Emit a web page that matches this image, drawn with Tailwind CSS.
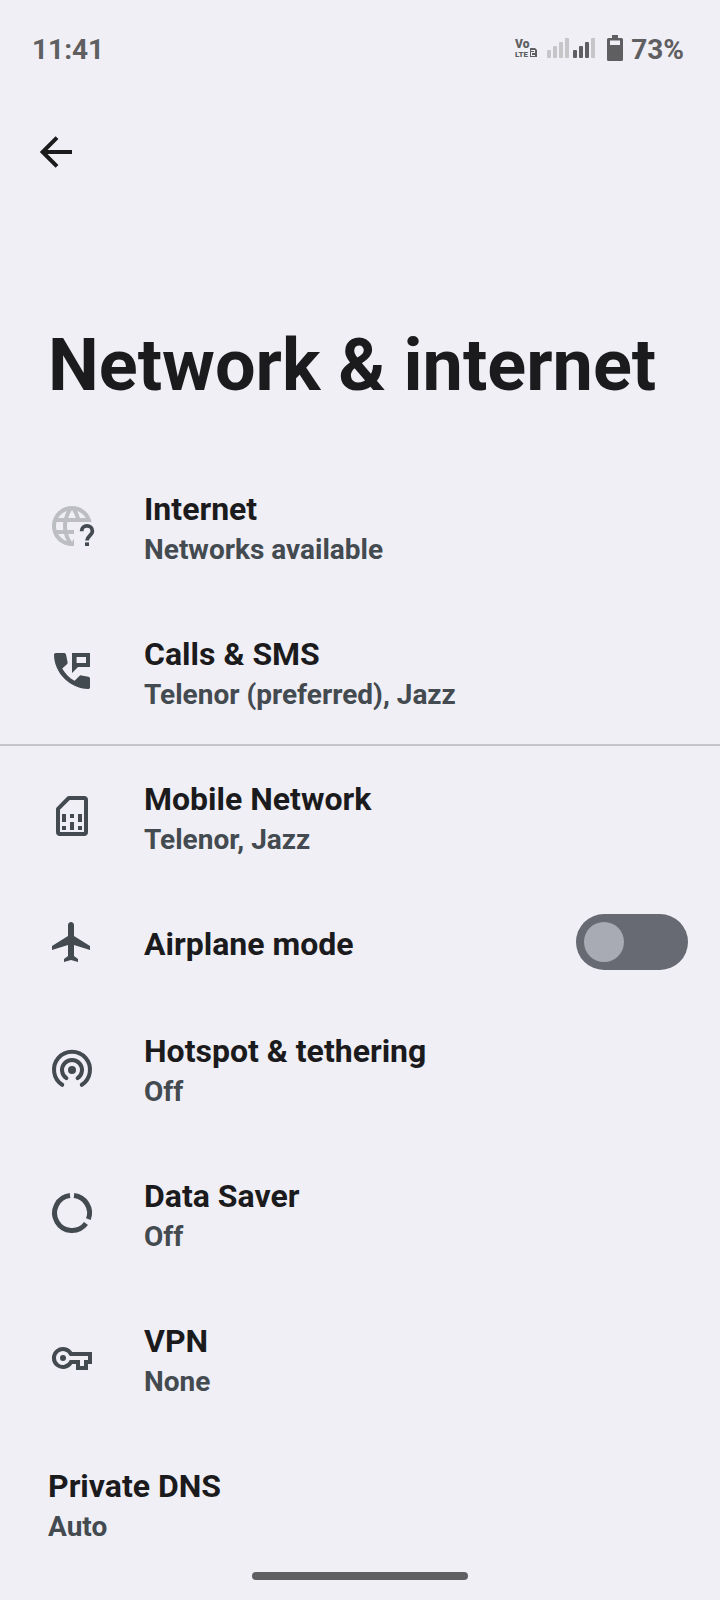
<!DOCTYPE html>
<html lang="en">
<head>
    <meta charset="UTF-8" />
    <meta name="viewport" content="width=device-width, initial-scale=1.0" />
    <title>Network &amp; internet</title>
    <script src="https://cdn.jsdelivr.net/npm/@tailwindcss/browser@4"></script>
</head>
<body class="min-h-screen bg-[#f0eff5] font-['Roboto',sans-serif] font-bold text-[#1b1b1d]">

<!-- Status bar -->
<div class="flex h-24 items-center justify-between pl-8 pr-9 text-[28px] leading-8 text-[#5f5f61]">
    <span class="pt-1">11:41</span>
    <div class="flex items-center">
        <svg class="mr-2 h-8 w-6" viewBox="0 0 24 32" fill="currentColor" font-family="Roboto, sans-serif" font-weight="900" aria-label="VoLTE 2">
            <text x="0" y="16" font-size="12">Vo</text>
            <text x="0" y="25" font-size="8">LTE</text>
            <path fill-rule="evenodd" d="M15 16h5l2 2v7h-7zM16 18v1h3v1h-3v4h4v-1h-3v-2h3v-3z" />
        </svg>
        <svg class="mr-3 h-8 w-12" viewBox="0 0 48 32" fill="currentColor" aria-label="Signal">
            <g fill="#c6c6c9">
                <rect x="0" y="18" width="4" height="8" rx="1" />
                <rect x="6" y="14" width="4" height="12" rx="1" />
                <rect x="12" y="10" width="4" height="16" rx="1" />
                <rect x="18" y="6" width="4" height="20" rx="1" />
                <rect x="44" y="6" width="4" height="20" rx="1" />
            </g>
            <rect x="26" y="18" width="4" height="8" rx="1" />
            <rect x="32" y="14" width="4" height="12" rx="1" />
            <rect x="38" y="10" width="4" height="16" rx="1" />
        </svg>
        <svg class="mr-2 h-8 w-4" viewBox="0 0 16 32" fill="currentColor" aria-label="Battery">
            <path fill-rule="evenodd" d="M5 3h6v3h3.500a1.500 1.500 0 0 1 1.500 1.500v20a1.500 1.500 0 0 1-1.500 1.500h-13a1.500 1.500 0 0 1-1.500-1.500v-20a1.500 1.500 0 0 1 1.500-1.500H5zM3 8.500V13h10V8.500z" />
        </svg>
        <span class="pt-1">73%</span>
    </div>
</div>

<header>
    <div class="px-8 pt-8">
        <button type="button" aria-label="Back" class="block">
            <svg class="size-12" viewBox="0 0 24 24" fill="none" stroke="currentColor" stroke-width="2">
                <path d="M20 12H5.500M12.500 4.800 5.300 12l7.200 7.200" />
            </svg>
        </button>
    </div>
    <h1 class="px-12 pt-[148px] pb-[46px] text-[72px] leading-[83px]">Network &amp; internet</h1>
</header>

<main class="text-[32px] leading-10">
    <a href="#internet" class="flex min-h-[145px] items-center gap-12 px-12">
        <svg class="size-12 shrink-0 text-[#434a50]" viewBox="0 0 24 24" fill="currentColor">
            <clipPath id="globe"><path d="M0 0h24v10h-9.500v4H13v10H0z" /></clipPath>
            <path fill="#bdbec2" clip-path="url(#globe)" d="M11.990 2C6.470 2 2 6.480 2 12s4.470 10 9.990 10C17.520 22 22 17.520 22 12S17.520 2 11.990 2zm6.930 6h-2.950c-.32-1.250-.78-2.450-1.380-3.560 1.840.63 3.370 1.910 4.330 3.560zM12 4.040c.83 1.200 1.480 2.530 1.910 3.960h-3.820c.43-1.430 1.080-2.760 1.910-3.960zM4.260 14C4.100 13.360 4 12.690 4 12s.1-1.360.26-2h3.380c-.08.66-.14 1.320-.14 2s.06 1.340.14 2H4.260zm.82 2h2.950c.32 1.250.78 2.450 1.380 3.560-1.840-.63-3.370-1.900-4.330-3.560zm2.950-8H5.080c.96-1.660 2.490-2.930 4.330-3.560C8.810 5.550 8.350 6.750 8.030 8zM12 19.960c-.83-1.200-1.480-2.530-1.910-3.960h3.820c-.43 1.430-1.080 2.760-1.910 3.960zM15 14H9.660c-.09-.66-.16-1.320-.16-2s.07-1.350.16-2H15z" />
            <path fill="none" stroke="currentColor" stroke-width="1.900" d="M16.800 14.600a2.700 2.700 0 0 1 5.400 0c0 2.100-2.700 2.300-2.700 4.700" />
            <path d="M18.500 20.200h2V22h-2z" />
        </svg>
        <div class="pt-2">
            <h2>Internet</h2>
            <p class="text-[28px] leading-[42px] text-[#434a50]">Networks available</p>
        </div>
    </a>

    <a href="#calls" class="flex min-h-[145px] items-center gap-12 px-12">
        <svg class="size-12 shrink-0 text-[#434a50]" viewBox="0 0 24 24" fill="currentColor">
            <path d="M3.900 3H8c.5 0 .9.3 1 .8l.8 3.800c.1.4 0 .7-.3 1l-2.400 2.100c1.400 2.500 3.600 4.700 6.200 6.200l2.400-2.400c.3-.3.6-.4 1-.3l3.500.7c.5.1.8.5.8 1v4.200c0 .5-.4.900-.9.900C11 21 3 12.800 3 3.900c0-.5.4-.9.9-.9z" />
            <path fill-rule="evenodd" d="M12 3h9v7h-6l-3 3zM14.300 5v3H19V5z" />
        </svg>
        <div class="pt-2">
            <h2>Calls &amp; SMS</h2>
            <p class="text-[28px] leading-[42px] text-[#434a50]">Telenor (preferred), Jazz</p>
        </div>
    </a>

    <hr class="mt-px -mb-[3px] border-t-2 border-[#c6c5cc]" />

    <a href="#mobile" class="flex min-h-[145px] items-center gap-12 px-12">
        <svg class="size-12 shrink-0 text-[#434a50]" viewBox="0 0 24 24" fill="currentColor">
            <path fill="none" stroke="currentColor" stroke-width="2" stroke-linejoin="round" d="M10.400 3H18a1 1 0 0 1 1 1v16a1 1 0 0 1-1 1H6a1 1 0 0 1-1-1V8.400z" />
            <path d="M7 11h2v4H7zM11 11h2v2h-2zM15 11h2v4h-2zM7 17h2v2H7zM11 15h2v4h-2zM15 17h2v2h-2z" />
        </svg>
        <div class="pt-2">
            <h2>Mobile Network</h2>
            <p class="text-[28px] leading-[42px] text-[#434a50]">Telenor, Jazz</p>
        </div>
    </a>

    <div class="flex min-h-[107px] items-center gap-12 pl-12 pr-8">
        <svg class="size-12 shrink-0 text-[#434a50]" viewBox="0 0 24 24" fill="currentColor">
            <path d="M21 16v-2l-8-5V3.500C13 2.670 12.330 2 11.500 2S10 2.670 10 3.500V9l-8 5v2l8-2.500V19l-2 1.500V22l3.500-1 3.500 1v-1.500L13 19v-5.500l8 2.500z" />
        </svg>
        <label for="airplane" class="flex-1 pt-1">Airplane mode</label>
        <input type="checkbox" role="switch" id="airplane" class="h-14 w-28 shrink-0 appearance-none rounded-full bg-[#676a72] p-2 before:block before:size-10 before:rounded-full before:bg-[#a8abb4] before:content-[''] checked:before:ml-auto" />
    </div>

    <a href="#hotspot" class="flex min-h-[145px] items-center gap-12 px-12">
        <svg class="size-12 shrink-0 text-[#434a50]" viewBox="0 0 24 24" fill="none" stroke="currentColor" stroke-width="2" stroke-linecap="round">
            <path d="M7.100 20.400a9 9 0 1 1 9.800 0M9.200 17.100a5 5 0 1 1 5.600 0" />
            <circle cx="12" cy="13" r="2" fill="currentColor" stroke="none" />
        </svg>
        <div class="pt-2">
            <h2>Hotspot &amp; tethering</h2>
            <p class="text-[28px] leading-[42px] text-[#434a50]">Off</p>
        </div>
    </a>

    <a href="#data-saver" class="flex min-h-[145px] items-center gap-12 px-12">
        <svg class="size-12 shrink-0 text-[#434a50]" viewBox="0 0 24 24" fill="none" stroke="currentColor" stroke-width="2.500">
            <path d="M13 3.300a8.750 8.750 0 0 1 7.200 11.800M19 17.300A8.750 8.750 0 1 1 11 3.300" />
        </svg>
        <div class="pt-2">
            <h2>Data Saver</h2>
            <p class="text-[28px] leading-[42px] text-[#434a50]">Off</p>
        </div>
    </a>

    <a href="#vpn" class="flex min-h-[145px] items-center gap-12 px-12">
        <svg class="size-12 shrink-0 text-[#434a50]" viewBox="0 0 24 24" fill="none" stroke="currentColor" stroke-width="2">
            <path d="M11.500 10H21v4h-2v3h-4v-3h-3.500a4.500 4.500 0 1 1 0-4z" />
            <circle cx="7.500" cy="12" r="1.500" fill="currentColor" stroke="none" />
        </svg>
        <div class="pt-2">
            <h2>VPN</h2>
            <p class="text-[28px] leading-[42px] text-[#434a50]">None</p>
        </div>
    </a>

    <a href="#dns" class="flex min-h-[145px] items-center px-12">
        <div class="pt-2">
            <h2>Private DNS</h2>
            <p class="text-[28px] leading-[42px] text-[#434a50]">Auto</p>
        </div>
    </a>
</main>

<!-- Gesture bar -->
<div class="fixed inset-x-0 bottom-5 mx-auto h-2 w-3/10 rounded-full bg-[#5f5f61]"></div>

</body>
</html>
